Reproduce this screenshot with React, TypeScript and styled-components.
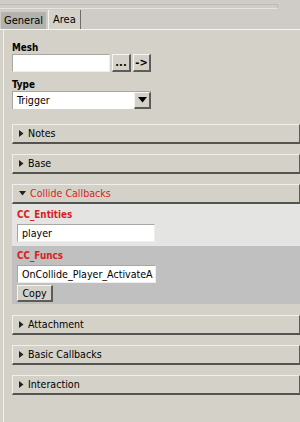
import React from "react";
import styled, { createGlobalStyle } from "styled-components";

const Global = createGlobalStyle`
  html, body { margin: 0; padding: 0; background: #d4d1c9; }
  body { font-family: "DejaVu Sans Condensed", "DejaVu Sans", Verdana, sans-serif; font-size: 10.6px; line-height: 13px; color: #000; }
`;

const Page = styled.div`
  width: 300px;
  height: 422px;
  overflow: hidden;
  background: #d4d1c9;
  display: flex;
  flex-direction: column;
`;

const TopStrip = styled.div`
  height: 10px;
  flex-shrink: 0;
  background: #cfccc8;
  display: flex;
  align-items: flex-start;
`;

const Groove = styled.div`
  width: 277px;
  height: 3px;
  margin-top: 4px;
  border-top: 1px solid #bdbab5;
  border-bottom: 1px solid #e6e4e0;
  border-right: 1px solid #bdbab5;
`;

const TabBar = styled.div`
  height: 19px;
  flex-shrink: 0;
  display: flex;
  align-items: flex-end;
  background: #cfccc8;
  border-bottom: 1px solid #f6f5f2;
`;

const Tab = styled.div<{ $active?: boolean }>`
  height: ${(p) => (p.$active ? 19 : 17)}px;
  display: flex;
  align-items: center;
  padding: 0 ${(p) => (p.$active ? 4 : 3)}px;
  background: ${(p) => (p.$active ? "#d4d1c9" : "#b4b2ae")};
  border-left: 1px solid ${(p) => (p.$active ? "#f4f3f0" : "#cfccc8")};
  border-right: 1px solid ${(p) => (p.$active ? "#6f6d69" : "#cfccc8")};
  font-size: 11px;
  line-height: 11px;
  margin-right: 1px;
`;

const Panel = styled.div`
  flex: 1;
  margin-left: 3px;
  border-left: 1px solid #f2f1ee;
  padding: 12px 0 0 8px;
  display: flex;
  flex-direction: column;
`;

const Label = styled.div<{ $red?: boolean }>`
  flex-shrink: 0;
  font-weight: bold;
  font-size: 9.8px;
  line-height: 12px;
  height: 12px;
  color: ${(p) => (p.$red ? "#d81e1e" : "#000")};
`;

const Row = styled.div`
  display: flex;
  align-items: center;
  gap: 2px;
  margin-bottom: 7px;
`;

const TextInput = styled.div<{ $w: number }>`
  flex-shrink: 0;
  width: ${(p) => p.$w}px;
  height: 18px;
  box-sizing: border-box;
  background: #fff;
  border-top: 1px solid #a9a7a2;
  border-left: 1px solid #a9a7a2;
  border-bottom: 1px solid #efeeec;
  border-right: 1px solid #efeeec;
  padding: 1px 0 0 4px;
  line-height: 15px;
  white-space: nowrap;
  overflow: hidden;
`;

const SmallButton = styled.div<{ $w: number }>`
  width: ${(p) => p.$w}px;
  height: 18px;
  box-sizing: border-box;
  background: #d4d1c9;
  border-top: 1px solid #f5f4f1;
  border-left: 1px solid #f5f4f1;
  border-right: 2px solid #5e5c58;
  border-bottom: 2px solid #5e5c58;
  display: flex;
  align-items: center;
  justify-content: center;
  font-size: 11px;
  font-weight: bold;
`;

const Select = styled.div`
  width: 139px;
  height: 18px;
  box-sizing: border-box;
  background: #fff;
  border-top: 1px solid #a9a7a2;
  border-left: 1px solid #a9a7a2;
  display: flex;
  align-items: center;
  justify-content: space-between;
  padding-left: 4px;
  margin-bottom: 15px;
`;

const SelectArrow = styled.div`
  width: 17px;
  height: 17px;
  box-sizing: border-box;
  background: #d4d1c9;
  border-top: 1px solid #f5f4f1;
  border-left: 1px solid #f5f4f1;
  border-right: 2px solid #5e5c58;
  border-bottom: 2px solid #5e5c58;
  display: flex;
  align-items: center;
  justify-content: center;
`;

const Section = styled.div`
  margin-bottom: 10px;
  display: flex;
  flex-direction: column;
`;

const Header = styled.div<{ $open?: boolean }>`
  height: 20px;
  box-sizing: border-box;
  background: #d4d1c9;
  border-top: 1px solid #f0efeb;
  border-left: 1px solid #f0efeb;
  border-right: 1px solid #5e5c58;
  border-bottom: 2px solid #55534f;
  display: flex;
  align-items: center;
  padding-left: 6px;
  gap: 4px;
  color: ${(p) => (p.$open ? "#d81e1e" : "#000")};
`;

const Body = styled.div`
  display: flex;
  flex-direction: column;
  margin-top: -10px;
  margin-bottom: 11px;
`;

const Field = styled.div<{ $dark?: boolean }>`
  background: ${(p) => (p.$dark ? "#c0c0c0" : "#e4e4e3")};
  padding: ${(p) => (p.$dark ? "4px 0 2px 5px" : "5px 0 4px 5px")};
  display: flex;
  flex-direction: column;
  gap: 3px;
`;

const CopyButton = styled.div`
  flex-shrink: 0;
  width: 36px;
  height: 17px;
  margin-top: -1px;
  box-sizing: border-box;
  background: #d4d1c9;
  border-top: 1px solid #f5f4f1;
  border-left: 1px solid #f5f4f1;
  border-right: 2px solid #5e5c58;
  border-bottom: 2px solid #5e5c58;
  display: flex;
  align-items: center;
  justify-content: center;
`;

const Tri = ({ open }: { open?: boolean }) =>
  open ? (
    <svg width="7" height="5" viewBox="0 0 7 5">
      <path d="M0 0 L7 0 L3.5 4.5 Z" fill="#222" />
    </svg>
  ) : (
    <svg width="5" height="7" viewBox="0 0 5 7">
      <path d="M0 0 L4.5 3.5 L0 7 Z" fill="#222" />
    </svg>
  );

const Collapsed = ({ title }: { title: string }) => (
  <Section>
    <Header>
      <Tri />
      <span>{title}</span>
    </Header>
  </Section>
);

export default function App() {
  return (
    <Page>
      <Global />
      <TopStrip>
        <Groove />
      </TopStrip>
      <TabBar>
        <Tab>General</Tab>
        <Tab $active>Area</Tab>
      </TabBar>
      <Panel>
        <Label>Mesh</Label>
        <Row>
          <TextInput $w={98} />
          <SmallButton $w={19}>...</SmallButton>
          <SmallButton $w={18}>-&gt;</SmallButton>
        </Row>
        <Label>Type</Label>
        <Select>
          <span>Trigger</span>
          <SelectArrow>
            <svg width="9" height="6" viewBox="0 0 9 6">
              <path d="M0 0 L9 0 L4.5 5.5 Z" fill="#000" />
            </svg>
          </SelectArrow>
        </Select>
        <Collapsed title="Notes" />
        <Collapsed title="Base" />
        <Section>
          <Header $open>
            <Tri open />
            <span>Collide Callbacks</span>
          </Header>
        </Section>
        <Body>
          <Field>
            <Label $red>CC_Entities</Label>
            <TextInput $w={138}>player</TextInput>
          </Field>
          <Field $dark>
            <Label $red>CC_Funcs</Label>
            <TextInput $w={139}>OnCollide_Player_ActivateA</TextInput>
            <CopyButton>Copy</CopyButton>
          </Field>
        </Body>
        <Collapsed title="Attachment" />
        <Collapsed title="Basic Callbacks" />
        <Collapsed title="Interaction" />
      </Panel>
    </Page>
  );
}
